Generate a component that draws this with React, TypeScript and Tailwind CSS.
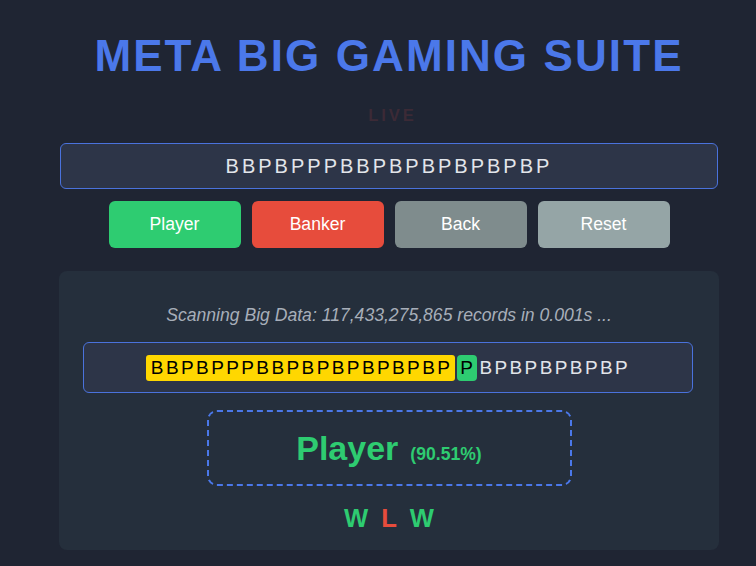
import React from 'react';

const history = 'BBPBPPPBBPBPBPBPBPBP';
const matched = 'BBPBPPPBBPBPBPBPBPBP';
const next = 'P';
const rest = 'BPBPBPBPBP';

const buttons = [
    { label: 'Player', cls: 'bg-[#2ecc71]' },
    { label: 'Banker', cls: 'bg-[#e74c3c]' },
    { label: 'Back', cls: 'bg-[#7f8c8d]' },
    { label: 'Reset', cls: 'bg-[#95a5a6]' },
];

const results = [
    { r: 'W', cls: 'text-[#2ecc71]' },
    { r: 'L', cls: 'text-[#e74c3c]' },
    { r: 'W', cls: 'text-[#2ecc71]' },
];

const App: React.FC = () => {
    return (
        <div className="min-h-[566px] w-full bg-[#1f2533] font-['Liberation_Sans',Arial,sans-serif] pt-[34px] pl-[59px]">
            <div className="w-[660px] flex flex-col">
                <h1 className="text-center text-[44px] leading-[44px] font-bold tracking-[2.1px] text-[#4b78ea]">
                    META BIG GAMING SUITE
                </h1>
                <div className="mt-[27px] pl-[7px] text-center text-[16.5px] leading-[20px] font-bold tracking-[3px] text-[#3c2a36]">
                    LIVE
                </div>

                {/* current road */}
                <div className="mt-[18px] ml-px w-[658px] h-[46px] rounded-[6px] border border-[#4a72dc] bg-[#2d3548] flex items-center justify-center text-[20px] tracking-[3px] text-[#e2e5ea]">
                    {history}
                </div>

                <div className="mt-[12px] flex justify-center gap-[11px]">
                    {buttons.map((b) => (
                        <button
                            key={b.label}
                            className={`${b.cls} w-[132px] h-[47px] rounded-[6px] text-white text-[17.6px] flex items-center justify-center`}
                        >
                            {b.label}
                        </button>
                    ))}
                </div>

                <div className="mt-[23px] h-[279px] rounded-[8px] bg-[#252f3c] pt-[32px] flex flex-col items-center">
                    <p className="text-[17.6px] leading-[24px] italic text-[#a7aeb9]">
                        Scanning Big Data: 117,433,275,865 records in 0.001s ...
                    </p>

                    <div className="mt-[15px] w-[610px] h-[51px] -translate-x-px rounded-[6px] border border-[#4a72dc] bg-[#2d3548] flex items-center justify-center text-[19px] tracking-[2.4px]">
                        <span className="bg-[#ffd700] text-black rounded-[3px] pl-[5px] pr-[3px] leading-[26px]">{matched}</span>
                        <span className="ml-[2px] bg-[#2ecc71] text-black rounded-[4px] pl-[3px] pr-[2px] leading-[26px]">{next}</span>
                        <span className="ml-[2px] text-[#e2e5ea] leading-[26px]">{rest}</span>
                    </div>

                    <div className="mt-[17px] w-[365px] h-[76px] rounded-[10px] border-2 border-dashed border-[#4b78ea] flex items-center justify-center">
                        <span className="text-[34px] font-bold text-[#2ecc71]">Player</span>
                        <span className="ml-[12px] mt-[12px] text-[17.6px] font-bold text-[#2ecc71]">(90.51%)</span>
                    </div>

                    <div className="mt-[17px] h-[30px] flex items-center gap-[13px] text-[25.6px] font-bold">
                        {results.map((x, i) => (
                            <span key={i} className={x.cls}>{x.r}</span>
                        ))}
                    </div>
                </div>
            </div>
        </div>
    );
};

export default App;
